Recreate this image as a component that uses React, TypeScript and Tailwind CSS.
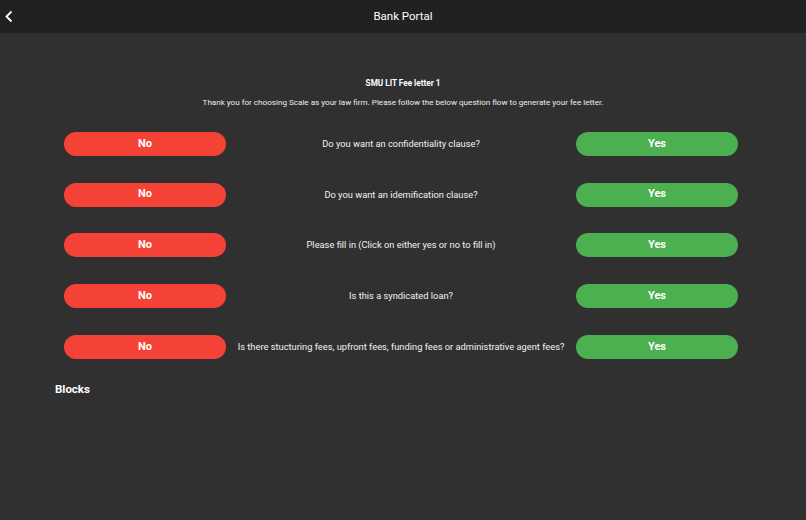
import React from "react";

const questions = [
  "Do you want an confidentiality clause?",
  "Do you want an idemification clause?",
  "Please fill in (Click on either yes or no to fill in)",
  "Is this a syndicated loan?",
  "Is there stucturing fees, upfront fees, funding fees or administrative agent fees?",
];

function QuestionRow({ text }: { text: string }) {
  return (
    <div className="grid grid-cols-[162px_1fr_162px] items-center">
      <button className="h-[24px] rounded-full bg-[#f44336] text-[11px] font-bold text-white">No</button>
      <div className="whitespace-nowrap text-center text-[9.3px] text-[#f2f2f2]">{text}</div>
      <button className="h-[24px] rounded-full bg-[#4caf50] text-[11px] font-bold text-white">Yes</button>
    </div>
  );
}

export default function App() {
  return (
    <div className="min-h-[520px] w-full bg-[#303030] font-['Roboto',sans-serif] text-white">
      {/* Header */}
      <div className="relative flex h-[33px] items-center justify-center bg-[#212121]">
        <button className="absolute left-[4px] top-[10px] text-white">
          <svg className="h-[13px] w-[10px]" viewBox="0 0 10 13" fill="none" stroke="currentColor" strokeWidth={1.8}>
            <path d="M7.5 1.5L2.5 6.5l5 5" />
          </svg>
        </button>
        <h1 className="text-[11.5px] text-white">Bank Portal</h1>
      </div>

      {/* Intro */}
      <div className="pt-[44px] text-center">
        <div className="text-[8.2px] font-bold leading-[12px]">SMU LIT Fee letter 1</div>
        <p className="mt-[7px] text-[8.1px] leading-[12px] text-[#eeeeee]">
          Thank you for choosing Scale as your law firm. Please follow the below question flow to generate your fee letter.
        </p>
      </div>

      {/* Questions */}
      <div className="mt-[24px] flex flex-col gap-[26.7px] pl-[64px] pr-[68px]">
        {questions.map((q) => (
          <QuestionRow key={q} text={q} />
        ))}
      </div>

      <h2 className="mt-[22px] pl-[55px] text-[11.5px] font-bold">Blocks</h2>
    </div>
  );
}
